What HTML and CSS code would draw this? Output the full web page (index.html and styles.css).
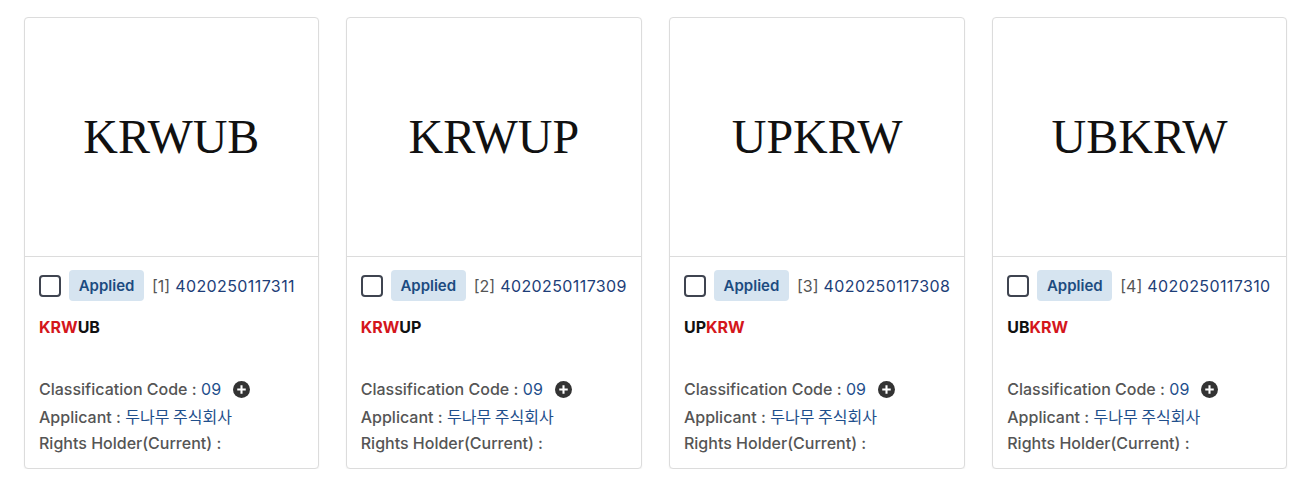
FILE: index.html
```html
<!DOCTYPE html>
<html lang="en">
<head>
<meta charset="utf-8">
<title>Trademarks</title>
<link rel="stylesheet" href="styles.css">
</head>
<body>
<div class="grid">
  <div class="card">
    <div class="mark"><span class="mark-text">KRWUB</span></div>
    <div class="info">
      <div class="row">
        <span class="checkbox"></span>
        <span class="badge">Applied</span>
        <span class="idx">[1]</span>
        <span class="num">4020250117311</span>
      </div>
      <div class="name"><span class="hl">KRW</span>UB</div>
      <div class="details">
        <div class="line"><span class="label">Classification Code :</span> <span class="val">09</span><svg class="plus" viewBox="0 0 18 18"><circle cx="9" cy="9" r="9" fill="#333"/><path d="M9 4.5v9M4.5 9h9" stroke="#fff" stroke-width="2.2"/></svg></div>
        <div class="line"><span class="label">Applicant :</span> <span class="val ko">두나무 주식회사</span></div>
        <div class="line"><span class="label">Rights Holder(Current) :</span></div>
      </div>
    </div>
  </div>
  <div class="card">
    <div class="mark"><span class="mark-text">KRWUP</span></div>
    <div class="info">
      <div class="row">
        <span class="checkbox"></span>
        <span class="badge">Applied</span>
        <span class="idx">[2]</span>
        <span class="num">4020250117309</span>
      </div>
      <div class="name"><span class="hl">KRW</span>UP</div>
      <div class="details">
        <div class="line"><span class="label">Classification Code :</span> <span class="val">09</span><svg class="plus" viewBox="0 0 18 18"><circle cx="9" cy="9" r="9" fill="#333"/><path d="M9 4.5v9M4.5 9h9" stroke="#fff" stroke-width="2.2"/></svg></div>
        <div class="line"><span class="label">Applicant :</span> <span class="val ko">두나무 주식회사</span></div>
        <div class="line"><span class="label">Rights Holder(Current) :</span></div>
      </div>
    </div>
  </div>
  <div class="card">
    <div class="mark"><span class="mark-text">UPKRW</span></div>
    <div class="info">
      <div class="row">
        <span class="checkbox"></span>
        <span class="badge">Applied</span>
        <span class="idx">[3]</span>
        <span class="num">4020250117308</span>
      </div>
      <div class="name">UP<span class="hl">KRW</span></div>
      <div class="details">
        <div class="line"><span class="label">Classification Code :</span> <span class="val">09</span><svg class="plus" viewBox="0 0 18 18"><circle cx="9" cy="9" r="9" fill="#333"/><path d="M9 4.5v9M4.5 9h9" stroke="#fff" stroke-width="2.2"/></svg></div>
        <div class="line"><span class="label">Applicant :</span> <span class="val ko">두나무 주식회사</span></div>
        <div class="line"><span class="label">Rights Holder(Current) :</span></div>
      </div>
    </div>
  </div>
  <div class="card">
    <div class="mark"><span class="mark-text">UBKRW</span></div>
    <div class="info">
      <div class="row">
        <span class="checkbox"></span>
        <span class="badge">Applied</span>
        <span class="idx">[4]</span>
        <span class="num">4020250117310</span>
      </div>
      <div class="name">UB<span class="hl">KRW</span></div>
      <div class="details">
        <div class="line"><span class="label">Classification Code :</span> <span class="val">09</span><svg class="plus" viewBox="0 0 18 18"><circle cx="9" cy="9" r="9" fill="#333"/><path d="M9 4.5v9M4.5 9h9" stroke="#fff" stroke-width="2.2"/></svg></div>
        <div class="line"><span class="label">Applicant :</span> <span class="val ko">두나무 주식회사</span></div>
        <div class="line"><span class="label">Rights Holder(Current) :</span></div>
      </div>
    </div>
  </div>
</div>
</body>
</html>
```
FILE: styles.css
```css
html, body {
  margin: 0;
  padding: 0;
  background: #fff;
}
body {
  font-family: Inter, "Noto Sans", "Noto Sans CJK KR", sans-serif;
  color: #222;
}
.grid {
  display: grid;
  grid-template-columns: repeat(4, 1fr);
  gap: 27px;
  padding: 17px 23px 0 24px;
}
.card {
  border: 1px solid #dcdcdc;
  border-radius: 4px;
  box-shadow: 0 1px 2px rgba(0,0,0,0.06);
  height: 452px;
  box-sizing: border-box;
  display: flex;
  flex-direction: column;
  background: #fff;
}
.mark {
  height: 238px;
  border-bottom: 1px solid #dcdcdc;
  display: flex;
  align-items: center;
  justify-content: center;
}
.mark-text {
  font-family: "Liberation Serif", "Times New Roman", serif;
  font-size: 48px;
  color: #111;
  line-height: 1;
}
.info {
  padding: 13px 14px 0 14px;
}
.row {
  display: flex;
  align-items: center;
  height: 31px;
}
.checkbox {
  width: 22px;
  height: 22px;
  box-sizing: border-box;
  border: 2px solid #3f4450;
  border-radius: 4px;
  margin-right: 8px;
}
.badge {
  height: 31px;
  width: 75px;
  box-sizing: border-box;
  display: flex;
  align-items: center;
  justify-content: center;
  background: #d6e4f0;
  color: #1c4b80;
  border-radius: 4px;
  font-size: 15px;
  font-weight: 600;
  margin-right: 8px;
}
.idx {
  color: #555;
  font-size: 16px;
  margin-right: 5px;
}
.num {
  color: #1d3e78;
  font-size: 16px;
  letter-spacing: 0.4px;
}
.name {
  margin-top: 16px;
  font-size: 16px;
  font-weight: 700;
  line-height: 20px;
  color: #111;
}
.hl {
  color: #d4161c;
}
.details {
  margin-top: 39px;
}
.line {
  line-height: 27px;
  height: 27px;
  font-size: 16px;
  white-space: nowrap;
}
.label {
  color: #555;
  font-weight: 500;
}
.val {
  color: #1f4f8c;
}
.ko {
  font-family: "Noto Sans CJK KR", sans-serif;
}
.plus {
  width: 17px;
  height: 17px;
  margin-left: 12px;
  vertical-align: -3px;
}
```
